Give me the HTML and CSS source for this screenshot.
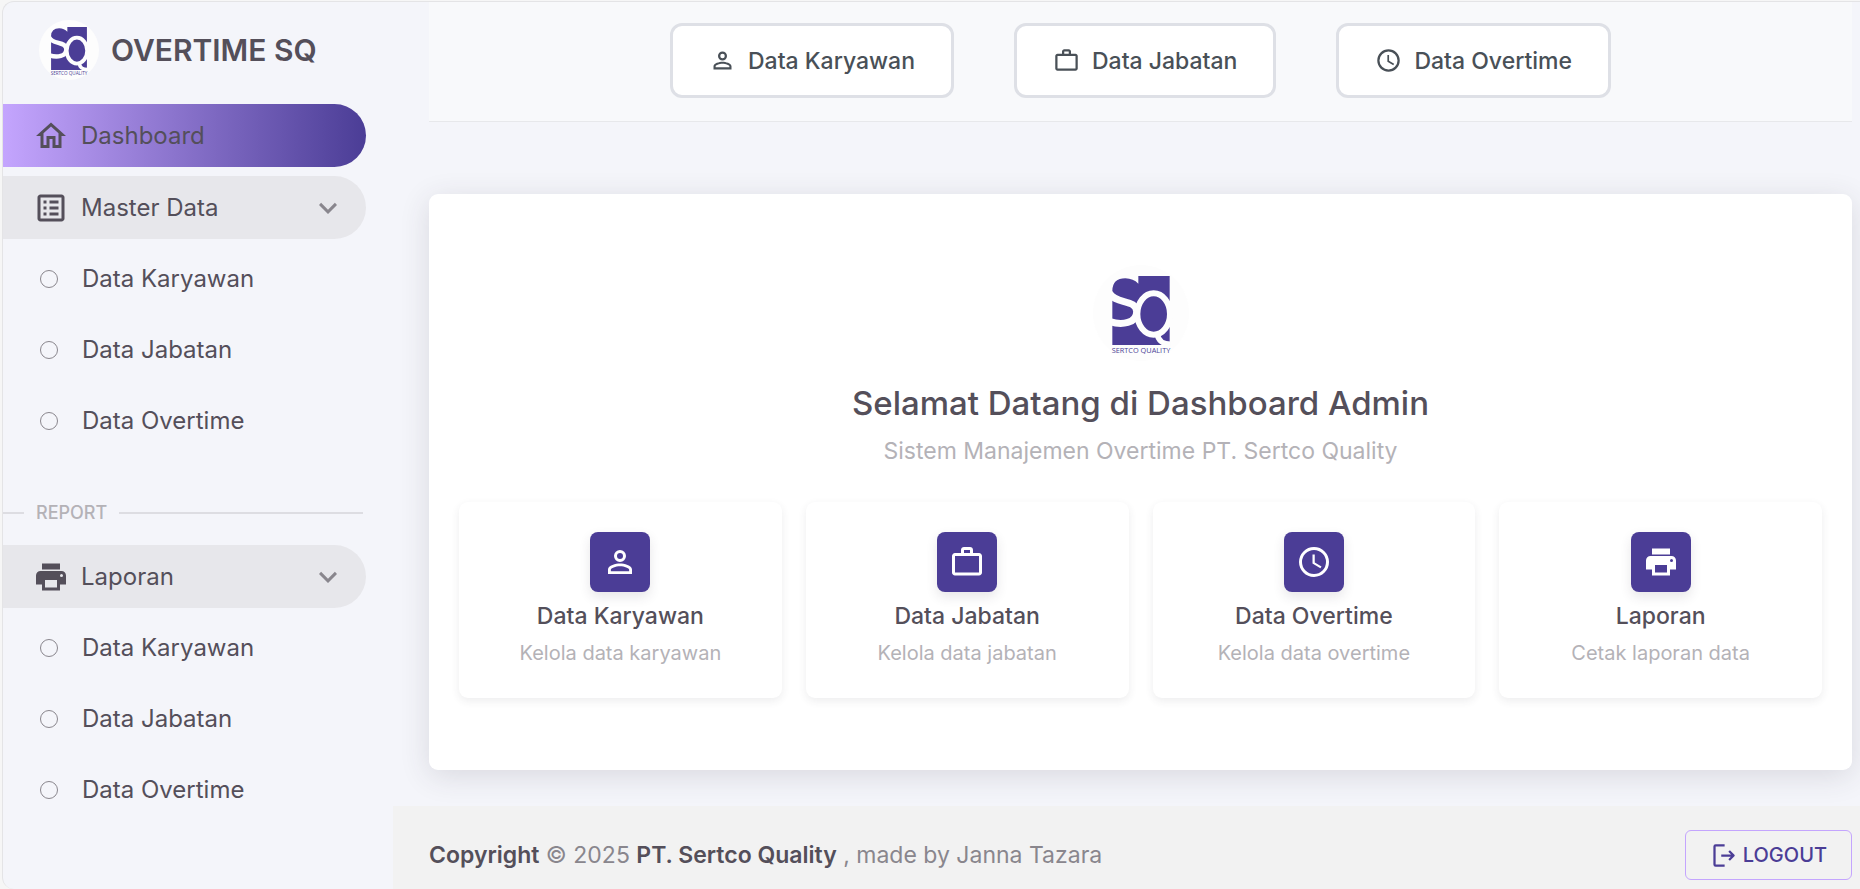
FILE: index.html
```html
<!DOCTYPE html>
<html lang="id">
<head>
<meta charset="utf-8">
<title>Dashboard - Overtime SQ</title>
<link rel="stylesheet" href="styles.css">
</head>
<body>
<svg class="defs" aria-hidden="true">
  <symbol id="logo" viewBox="69 43 288 288">
    <circle cx="213" cy="187" r="144" fill="#fdfdfd"/>
    <path fill="#4b3d96" d="M205 76H299V283H127V120Q128 83 166 83Q190 84 205 99Z"/>
    <path fill="none" stroke="#fdfdfd" stroke-width="21" d="M118 126C134 162 200 144 200 183C200 218 156 224 120 213"/>
    <ellipse cx="251" cy="190" rx="49" ry="62" fill="#4b3d96" stroke="#fdfdfd" stroke-width="18"/>
    <path fill="none" stroke="#fdfdfd" stroke-width="17" d="M262 250C264 268 278 281 302 281"/>
  </symbol>
  <symbol id="home" viewBox="0 0 24 24"><path d="M12 5.69L17 10.19V18H15V12H9V18H7V10.19L12 5.69M12 3L2 12H5V20H11V14H13V20H19V12H22L12 3Z"/></symbol>
  <symbol id="list" viewBox="0 0 24 24"><path d="M11 15H17V17H11V15M9 7H7V9H9V7M11 13H17V11H11V13M11 9H17V7H11V9M9 11H7V13H9V11M21 5V19C21 20.1 20.1 21 19 21H5C3.89 21 3 20.1 3 19V5C3 3.9 3.9 3 5 3H19C20.1 3 21 3.9 21 5M19 5H5V19H19V5M9 15H7V17H9V15Z"/></symbol>
  <symbol id="printer" viewBox="0 0 24 24"><path d="M18,3H6V7H18M19,12A1,1 0 0,1 18,11A1,1 0 0,1 19,10A1,1 0 0,1 20,11A1,1 0 0,1 19,12M16,19H8V14H16M19,8H5A3,3 0 0,0 2,11V17H6V21H18V17H22V11A3,3 0 0,0 19,8Z"/></symbol>
  <symbol id="account" viewBox="0 0 24 24"><path d="M12,4A4,4 0 0,1 16,8A4,4 0 0,1 12,12A4,4 0 0,1 8,8A4,4 0 0,1 12,4M12,6A2,2 0 0,0 10,8A2,2 0 0,0 12,10A2,2 0 0,0 14,8A2,2 0 0,0 12,6M12,13C14.67,13 20,14.33 20,17V20H4V17C4,14.33 9.33,13 12,13M12,14.9C9.03,14.9 5.9,16.36 5.9,17V18.1H18.1V17C18.1,16.36 14.97,14.9 12,14.9Z"/></symbol>
  <symbol id="briefcase" viewBox="0 0 24 24"><path d="M20,6C20.58,6 21.05,6.2 21.42,6.59C21.8,7 22,7.45 22,8V19C22,19.55 21.8,20 21.42,20.41C21.05,20.8 20.58,21 20,21H4C3.42,21 2.95,20.8 2.58,20.41C2.2,20 2,19.55 2,19V8C2,7.45 2.2,7 2.58,6.59C2.95,6.2 3.42,6 4,6H8V4C8,3.42 8.2,2.95 8.58,2.58C8.95,2.2 9.42,2 10,2H14C14.58,2 15.05,2.2 15.42,2.58C15.8,2.95 16,3.42 16,4V6H20M4,8V19H20V8H4M14,6V4H10V6H14Z"/></symbol>
  <symbol id="clock" viewBox="0 0 24 24"><path d="M12,20A8,8 0 0,0 20,12A8,8 0 0,0 12,4A8,8 0 0,0 4,12A8,8 0 0,0 12,20M12,2A10,10 0 0,1 22,12A10,10 0 0,1 12,22C6.47,22 2,17.5 2,12A10,10 0 0,1 12,2M12.5,7V12.25L17,14.92L16.25,16.15L11,13V7H12.5Z"/></symbol>
  <symbol id="chevron" viewBox="0 0 24 24"><path d="M7.41,8.58L12,13.17L16.59,8.58L18,10L12,16L6,10L7.41,8.58Z"/></symbol>
  <symbol id="exit" viewBox="0 0 24 24"><path fill="none" stroke="currentColor" stroke-width="2" stroke-linejoin="round" d="M13 3H5Q4 3 4 4V20Q4 21 5 21H13M10 12H21M17 8L21 12L17 16"/></symbol>
</svg>
<div class="shell">
  <aside class="sidebar">
    <a class="brand" href="#">
      <svg class="brand-logo" viewBox="0 0 288 288"><use href="#logo" width="288" height="288"/><text class="logo-text" x="144" y="263">SERTCO QUALITY</text></svg>
      <span>OVERTIME SQ</span>
    </a>
    <nav class="menu">
      <a class="item active" href="#"><svg class="icon"><use href="#home"/></svg>Dashboard</a>
      <button class="item open" type="button"><svg class="icon"><use href="#list"/></svg>Master Data<svg class="caret"><use href="#chevron"/></svg></button>
      <div class="submenu">
        <a class="subitem" href="#">Data Karyawan</a>
        <a class="subitem" href="#">Data Jabatan</a>
        <a class="subitem" href="#">Data Overtime</a>
      </div>
      <div class="divider">REPORT</div>
      <button class="item open" type="button"><svg class="icon"><use href="#printer"/></svg>Laporan<svg class="caret"><use href="#chevron"/></svg></button>
      <div class="submenu">
        <a class="subitem" href="#">Data Karyawan</a>
        <a class="subitem" href="#">Data Jabatan</a>
        <a class="subitem" href="#">Data Overtime</a>
      </div>
    </nav>
  </aside>
  <div class="page">
    <header class="topbar">
      <a class="shortcut" href="#"><svg class="icon-sm"><use href="#account"/></svg>Data Karyawan</a>
      <a class="shortcut" href="#"><svg class="icon-sm"><use href="#briefcase"/></svg>Data Jabatan</a>
      <a class="shortcut" href="#"><svg class="icon-sm"><use href="#clock"/></svg>Data Overtime</a>
    </header>
    <main class="welcome">
      <svg class="welcome-logo" viewBox="0 0 288 288"><use href="#logo" width="288" height="288"/><text class="logo-text" x="144" y="263">SERTCO QUALITY</text></svg>
      <h1>Selamat Datang di Dashboard Admin</h1>
      <p class="lead">Sistem Manajemen Overtime PT. Sertco Quality</p>
      <div class="tiles">
        <a class="tile" href="#"><span class="badge"><svg class="icon"><use href="#account"/></svg></span><h2>Data Karyawan</h2><p>Kelola data karyawan</p></a>
        <a class="tile" href="#"><span class="badge"><svg class="icon"><use href="#briefcase"/></svg></span><h2>Data Jabatan</h2><p>Kelola data jabatan</p></a>
        <a class="tile" href="#"><span class="badge"><svg class="icon"><use href="#clock"/></svg></span><h2>Data Overtime</h2><p>Kelola data overtime</p></a>
        <a class="tile" href="#"><span class="badge"><svg class="icon"><use href="#printer"/></svg></span><h2>Laporan</h2><p>Cetak laporan data</p></a>
      </div>
    </main>
    <footer class="footer">
      <div><strong>Copyright</strong> © 2025 <strong>PT. Sertco Quality</strong> , made by <a href="#">Janna Tazara</a></div>
      <button class="logout" type="button"><svg class="icon-sm"><use href="#exit"/></svg>LOGOUT</button>
    </footer>
  </div>
</div>
</body>
</html>
```
FILE: styles.css
```css
*, *::before, *::after { box-sizing: border-box; }
body {
  margin: 0;
  padding: 1px 0 0 2px;
  min-height: 100vh;
  display: flex;
  flex-direction: column;
  background: #f6f6f6;
  color: #544f5a;
  font: 400 24px/36px Inter, sans-serif;
}
a { color: inherit; text-decoration: none; }
h1, h2, p { margin: 0; }
button { font: inherit; color: inherit; background: none; border: 0; cursor: pointer; }
svg { flex: none; fill: currentColor; }
.defs { position: absolute; width: 0; height: 0; }
.icon { width: 36px; height: 36px; }
.icon-sm { width: 27px; height: 27px; }
.logo-text { font: 400 22px "Open Sans", sans-serif; text-anchor: middle; fill: #4b3d96; }

.shell {
  display: flex;
  flex: 1;
  border: 1px solid #e4e4e6;
  border-right: 0;
  border-bottom: 0;
  border-radius: 12px 0 0 12px;
  background: #f4f5fa;
}
.sidebar { width: 390px; flex: none; }
.brand {
  display: flex;
  align-items: center;
  gap: 12px;
  padding: 18px 36px 24px;
  font-size: 30px;
  font-weight: 600;
}
.brand-logo { width: 60px; height: 60px; }
.menu { width: 363px; }
.item {
  display: flex;
  align-items: center;
  gap: 12px;
  width: 100%;
  height: 63px;
  margin-bottom: 9px;
  padding: 0 20px 0 30px;
  border-radius: 0 32px 32px 0;
  text-align: left;
}
.active { background: linear-gradient(90deg, #c4a5fe, #4b3d96); }
.open { background: #e7e7eb; }
.caret { width: 36px; height: 36px; margin-left: auto; color: #89868d; }
.submenu { display: grid; gap: 9px; }
.subitem { display: flex; align-items: center; gap: 24px; height: 62px; padding-left: 37px; }
.subitem::before { content: ""; width: 18px; height: 18px; border: 1px solid #89868d; border-radius: 50%; }
.divider {
  display: flex;
  align-items: center;
  gap: 12px;
  margin: 43px 3px 14px 0;
  color: #b4b2b7;
  font-size: 18px;
  font-weight: 500;
}
.divider::before, .divider::after { content: ""; height: 2px; background: #dddde2; }
.divider::before { width: 21px; }
.divider::after { flex: 1; }

.page { display: flex; flex-direction: column; flex: 1; min-width: 0; }
.topbar {
  display: flex;
  justify-content: center;
  gap: 60px;
  margin: 0 8px 0 36px;
  padding: 21px 0 23px;
  border-bottom: 1px solid #e7e8eb;
  background: #f8f9fb;
}
.shortcut {
  display: flex;
  align-items: center;
  gap: 12px;
  height: 75px;
  padding: 0 36px;
  border: 3px solid #dee0e6;
  border-radius: 12px;
  background: #fff;
  color: #495057;
  font-size: 23px;
  font-weight: 500;
}
.welcome {
  display: flex;
  flex-direction: column;
  align-items: center;
  margin: 72px 8px 36px 36px;
  padding: 71px 30px 72px;
  border-radius: 9px;
  background: #fff;
  box-shadow: 0 6px 30px rgba(58, 53, 65, .14);
}
.welcome-logo { width: 96px; height: 96px; }
h1 { margin-top: 18px; font-size: 33px; font-weight: 500; line-height: 48px; }
.lead { margin-top: 6px; color: #b4b2b7; font-size: 23px; }
.tiles { display: grid; grid-template-columns: repeat(4, 1fr); gap: 24px; align-self: stretch; margin-top: 33px; }
.tile {
  display: flex;
  flex-direction: column;
  align-items: center;
  padding: 30px;
  border-radius: 9px;
  box-shadow: 0 3px 9px rgba(58, 53, 65, .09);
}
.badge {
  display: grid;
  place-items: center;
  width: 60px;
  height: 60px;
  border-radius: 8px;
  background: #4b3d96;
  color: #fff;
  box-shadow: 0 5px 12px rgba(58, 53, 65, .12);
}
h2 { margin-top: 6px; font-size: 23px; font-weight: 500; line-height: 36px; }
.tile p { margin-top: 4px; color: #b4b2b7; font-size: 20px; line-height: 30px; }
.footer {
  display: flex;
  flex: 1;
  align-items: flex-start;
  justify-content: space-between;
  padding: 24px 8px 6px 36px;
  background: #f2f2f2;
  color: #89868d;
  font-size: 23px;
  line-height: 50px;
}
.footer strong { color: #544f5a; font-weight: 600; }
.logout {
  display: flex;
  align-items: center;
  gap: 6px;
  height: 50px;
  padding: 0 24px;
  border: 1px solid #c4a5fe;
  border-radius: 6px;
  color: #4b3d96;
  font-size: 20px;
  font-weight: 500;
}
```
